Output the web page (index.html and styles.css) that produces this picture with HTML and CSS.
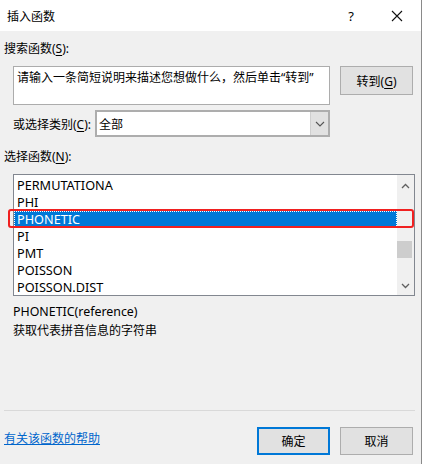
FILE: index.html
```html
<!DOCTYPE html>
<html lang="zh-CN">
<head>
    <meta charset="UTF-8">
    <title>插入函数</title>
    <link rel="stylesheet" href="styles.css">
</head>
<body>
    <div class="dialog">
        <header class="titlebar">
            <span class="title">插入函数</span>
            <span class="help-btn">?</span>
            <span class="close-btn">
                <svg width="12" height="12" viewBox="0 0 12 12"><path d="M1 1 L11 11 M11 1 L1 11" stroke="#111" stroke-width="1.1" fill="none"/></svg>
            </span>
        </header>

        <main class="content">
            <div class="label">搜索函数(<u>S</u>):</div>
            <div class="search-row">
                <div class="search-box">请输入一条简短说明来描述您想做什么，然后单击“转到”</div>
                <button class="btn">转到(<u>G</u>)</button>
            </div>

            <div class="category-row">
                <span class="category-label">或选择类别(<u>C</u>):</span>
                <div class="select">
                    <span class="select-value">全部</span>
                    <span class="select-arrow">
                        <svg width="10" height="6" viewBox="0 0 10 6"><path d="M1 1 L5 5 L9 1" stroke="#555" stroke-width="1.1" fill="none"/></svg>
                    </span>
                </div>
            </div>

            <div class="label label-list">选择函数(<u>N</u>):</div>
            <div class="listbox">
                <ul class="items">
                    <li>PERMUTATIONA</li>
                    <li>PHI</li>
                    <li class="selected">PHONETIC</li>
                    <li>PI</li>
                    <li>PMT</li>
                    <li>POISSON</li>
                    <li>POISSON.DIST</li>
                </ul>
                <div class="scrollbar">
                    <svg width="9" height="6" viewBox="0 0 9 6"><path d="M1 5 L4.5 1.5 L8 5" stroke="#606060" stroke-width="1.3" fill="none"/></svg>
                    <div class="track"><div class="thumb"></div></div>
                    <svg width="9" height="6" viewBox="0 0 9 6"><path d="M1 1 L4.5 4.5 L8 1" stroke="#606060" stroke-width="1.3" fill="none"/></svg>
                </div>
                <div class="highlight"></div>
            </div>

            <div class="desc">
                <p class="signature">PHONETIC(reference)</p>
                <p>获取代表拼音信息的字符串</p>
            </div>

            <div class="separator"></div>

            <footer class="footer">
                <a href="#" class="help-link">有关该函数的帮助</a>
                <div class="actions">
                    <button class="btn btn-default">确定</button>
                    <button class="btn">取消</button>
                </div>
            </footer>
        </main>
    </div>
</body>
</html>
```

FILE: styles.css
```css
body {
    margin: 0;
    background: #f0f0f0;
    font-family: "Noto Sans", "Noto Sans CJK SC", sans-serif;
    font-size: 12px;
    color: #000;
}

.dialog {
    width: 421px;
    height: 464px;
    border-right: 1px solid #8a8a8a;
    display: flex;
    flex-direction: column;
    overflow: hidden;
}

u {
    text-decoration: underline;
    text-underline-offset: 2px;
}

/* Title bar */
.titlebar {
    height: 31px;
    flex: none;
    background: #fff;
    display: flex;
    align-items: center;
    padding-left: 7px;
}

.title {
    flex: 1;
    font-size: 12px;
}

.help-btn {
    width: 46px;
    text-align: center;
    font-size: 13px;
    margin-left: 4px;
}

.close-btn {
    width: 46px;
    display: flex;
    justify-content: center;
    margin-right: 1px;
}

/* Content */
.content {
    flex: 1;
    padding: 9px 4px 9px 4px;
    display: flex;
    flex-direction: column;
}

.label {
    height: 18px;
    line-height: 18px;
}

.search-row {
    display: flex;
    gap: 10px;
    margin: 8px 0 0 9px;
}

.search-box {
    width: 317px;
    height: 39px;
    box-sizing: border-box;
    background: #fff;
    border: 1px solid #acacac;
    padding: 2px 0 0 3px;
    line-height: 18px;
}

.btn {
    width: 73px;
    height: 29px;
    background: #e1e1e1;
    border: 1px solid #adadad;
    font-family: inherit;
    font-size: 12px;
    padding: 0;
    color: #000;
}

.category-row {
    display: flex;
    align-items: center;
    margin: 5px 0 0 9px;
}

.category-label {
    width: 82px;
}

.select {
    width: 231px;
    height: 23px;
    border: 2px solid #adadad;
    background: #fff;
    display: flex;
    align-items: center;
}

.select-value {
    flex: 1;
    padding-left: 2px;
}

.select-arrow {
    width: 17px;
    height: 100%;
    background: #e1e1e1;
    border-left: 1px solid #cfcfcf;
    display: flex;
    align-items: center;
    justify-content: center;
}

.label-list {
    margin-top: 11px;
}

/* Function list */
.listbox {
    position: relative;
    flex: none;
    margin: 8px 0 0 9px;
    width: 400px;
    height: 120px;
    border: 1px solid #828790;
    background: #fff;
    display: flex;
}

.items {
    list-style: none;
    margin: 0;
    padding: 2px 0 0 0;
    flex: 1;
    font-size: 12.7px;
}

.items li {
    height: 17px;
    line-height: 17px;
    padding-left: 3px;
}

.items li.selected {
    background: #0078d7;
    color: #fff;
    outline: 1px dotted #fff;
    outline-offset: -1px;
}

.scrollbar {
    width: 17px;
    background: #f0f0f0;
    display: flex;
    flex-direction: column;
    align-items: center;
    padding: 8px 0 6px;
}

.track {
    flex: 1;
    width: 100%;
    position: relative;
}

.thumb {
    position: absolute;
    top: 52px;
    left: 0;
    width: 15px;
    height: 17px;
    background: #cdcdcd;
}

/* red annotation frame over the selected row */
.highlight {
    position: absolute;
    left: -6px;
    top: 34px;
    width: 402px;
    height: 15px;
    border: 2px solid #f02020;
    border-radius: 3px;
}

.desc {
    margin: 6px 0 0 9px;
}

.desc p {
    margin: 0;
    height: 19px;
    line-height: 19px;
}

.signature {
    font-size: 12.4px;
}

.separator {
    margin-top: auto;
    flex: none;
    height: 1px;
    background: #d9d9d9;
    width: 411px;
}

.footer {
    flex: none;
    height: 28px;
    display: flex;
    align-items: center;
    justify-content: space-between;
    margin-top: 16px;
}

.help-link {
    color: #0066cc;
    text-decoration: underline;
    margin-bottom: 6px;
}

.actions {
    display: flex;
    gap: 10px;
    margin-right: 4px;
}

.actions .btn {
    height: 28px;
}

.btn-default {
    border: 2px solid #0078d7;
}
```
